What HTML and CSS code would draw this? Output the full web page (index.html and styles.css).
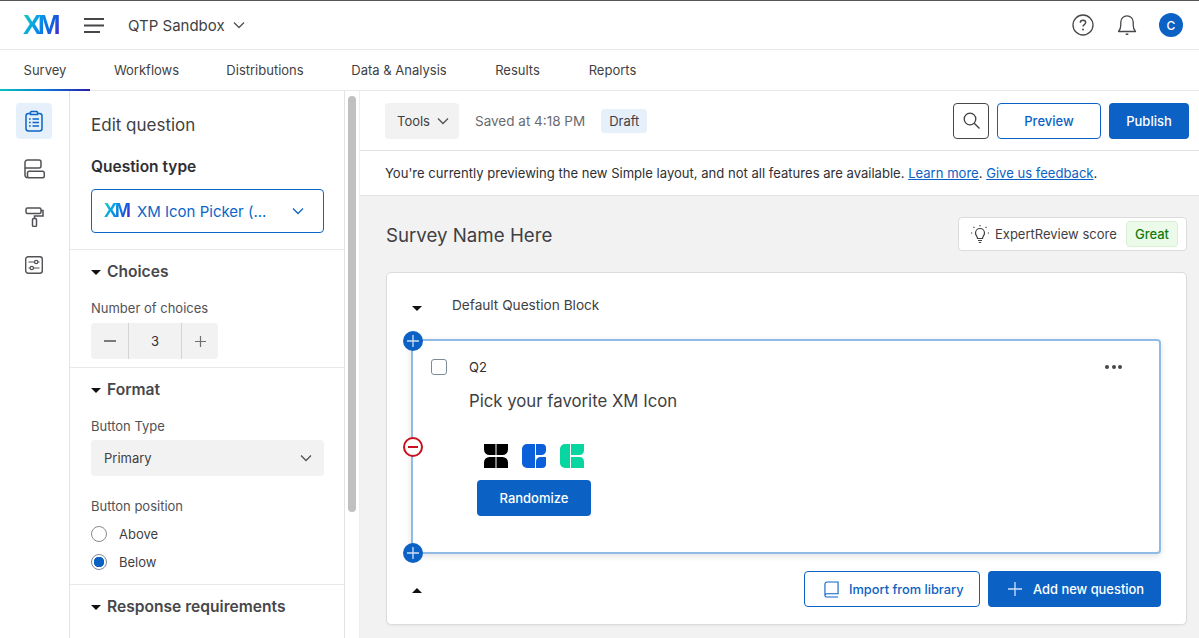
FILE: index.html
```html
<!DOCTYPE html>
<html lang="en">
<head>
<meta charset="utf-8">
<title>QTP Sandbox</title>
<link rel="stylesheet" href="styles.css">
</head>
<body>
<div class="app">
  <header class="topbar">
    <span class="logo">XM</span>
    <svg class="burger" width="20" height="15" viewBox="0 0 20 15"><path d="M0 1h20M0 7.500h20M0 14h16" stroke="#47474b" stroke-width="1.800" fill="none"/></svg>
    <span class="project">QTP Sandbox</span>
    <svg class="chev" width="12" height="8" viewBox="0 0 12 8"><path d="M1 1.500l5 5 5-5" stroke="#525256" stroke-width="1.300" fill="none"/></svg>
    <div class="top-icons">
      <svg width="22" height="22" viewBox="0 0 22 22"><circle cx="11" cy="11" r="10" stroke="#47474b" stroke-width="1.300" fill="none"/><path d="M8.300 8.800c0-1.600 1.200-2.600 2.700-2.600s2.700 1 2.700 2.400c0 2-2.700 2.100-2.700 4" stroke="#47474b" stroke-width="1.400" fill="none"/><circle cx="11" cy="15.600" r="1" fill="#47474b"/></svg>
      <svg width="20" height="22" viewBox="0 0 20 22"><path d="M1.500 17.500c1.400-1.400 2.300-3 2.300-6.500V8a6.200 6.200 0 0 1 12.400 0v3c0 3.500.9 5.100 2.300 6.500z" stroke="#47474b" stroke-width="1.300" fill="none" stroke-linejoin="round"/><path d="M8.700 20.200h2.600" stroke="#47474b" stroke-width="1.500"/></svg>
      <span class="avatar">C</span>
    </div>
  </header>
  <nav class="tabs">
    <a class="tab active">Survey</a>
    <a class="tab">Workflows</a>
    <a class="tab">Distributions</a>
    <a class="tab">Data &amp; Analysis</a>
    <a class="tab">Results</a>
    <a class="tab">Reports</a>
  </nav>
  <div class="body">
    <aside class="rail">
      <span class="rail-btn on">
        <svg width="18" height="22" viewBox="0 0 18 22"><rect x="1" y="3.500" width="16" height="17.500" rx="2.500" stroke="#0b66c8" stroke-width="1.500" fill="none"/><path d="M5.500 4.500V2.400a.9.900 0 0 1 .9-.9h5.200a.9.900 0 0 1 .9.900v2.100z" stroke="#0b66c8" stroke-width="1.500" fill="#e6f0fb"/><path d="M7.500 9H14M7.500 12.500H14M7.500 16H14M4 9h1.700M4 12.500h1.700M4 16h1.700" stroke="#0b66c8" stroke-width="1.500" fill="none"/></svg>
      </span>
      <span class="rail-btn">
        <svg width="21" height="20" viewBox="0 0 21 20"><path d="M3.500 18.800A2.500 2.500 0 0 1 1 16.300V3.500A2.500 2.500 0 0 1 3.500 1H15a2 2 0 0 1 2 2v4a2 2 0 0 1-2 2H1" stroke="#525256" stroke-width="1.500" fill="none"/><rect x="3.500" y="12.300" width="16.800" height="6.500" rx="1.800" stroke="#525256" stroke-width="1.500" fill="#fff"/></svg>
      </span>
      <span class="rail-btn">
        <svg width="19" height="20" viewBox="0 0 19 20"><rect x="1" y="1" width="15" height="5.500" rx="1.500" stroke="#525256" stroke-width="1.500" fill="none"/><path d="M16 3.500h2v5.500H9.500v2.500" stroke="#525256" stroke-width="1.500" fill="none"/><rect x="7.500" y="11.500" width="4" height="8" rx="1.200" stroke="#525256" stroke-width="1.500" fill="none"/></svg>
      </span>
      <span class="rail-btn">
        <svg width="18" height="18" viewBox="0 0 18 18"><rect x=".7" y=".7" width="16.600" height="16.600" rx="2.500" stroke="#525256" stroke-width="1.400" fill="none"/><path d="M3.500 6h6M13 6h1.500M3.500 12H5M8.500 12h6" stroke="#525256" stroke-width="1.200"/><circle cx="11.200" cy="6" r="1.700" stroke="#525256" stroke-width="1.200" fill="none"/><circle cx="6.800" cy="12" r="1.700" stroke="#525256" stroke-width="1.200" fill="none"/></svg>
      </span>
    </aside>
    <section class="panel">
      <div class="panel-top">
        <h1 class="panel-title">Edit question</h1>
        <h2 class="qtype-label">Question type</h2>
        <div class="qtype">
          <span class="logo logo-small">XM</span>
          <span class="qtype-text">XM Icon Picker (...</span>
          <svg class="qtype-chev" width="12" height="8" viewBox="0 0 12 8"><path d="M1 1.500l5 5 5-5" stroke="#0b66c8" stroke-width="1.300" fill="none"/></svg>
        </div>
      </div>
      <div class="group group-choices">
        <h3 class="group-head"><i class="caret"></i>Choices</h3>
        <div class="field-label">Number of choices</div>
        <div class="stepper">
          <span class="step"><svg width="12" height="2" viewBox="0 0 12 2"><path d="M0 1h12" stroke="#525256" stroke-width="1.500"/></svg></span>
          <span class="step-value">3</span>
          <span class="step step-plus"><svg width="11" height="11" viewBox="0 0 11 11"><path d="M0 5.500h11M5.500 0v11" stroke="#6f6f73" stroke-width="1.200"/></svg></span>
        </div>
      </div>
      <div class="group group-format">
        <h3 class="group-head"><i class="caret"></i>Format</h3>
        <div class="field-label">Button Type</div>
        <div class="select">Primary<svg width="12" height="8" viewBox="0 0 12 8"><path d="M1 1.500l5 5 5-5" stroke="#525256" stroke-width="1.300" fill="none"/></svg></div>
        <div class="field-label pos-label">Button position</div>
        <div class="radio-row"><i class="radio"></i>Above</div>
        <div class="radio-row"><i class="radio checked"></i>Below</div>
      </div>
      <div class="group group-resp">
        <h3 class="group-head"><i class="caret"></i>Response requirements</h3>
      </div>
    </section>
    <div class="scrolltrack"><div class="scrollthumb"></div></div>
    <main class="main">
      <div class="toolbar">
        <button class="tools">Tools<svg width="12" height="8" viewBox="0 0 12 8"><path d="M1 1.500l5 5 5-5" stroke="#525256" stroke-width="1.300" fill="none"/></svg></button>
        <span class="saved">Saved at 4:18 PM</span>
        <span class="draft">Draft</span>
        <span class="spacer"></span>
        <button class="search"><svg width="17" height="17" viewBox="0 0 17 17"><circle cx="7" cy="7" r="5.800" stroke="#3f3f43" stroke-width="1.300" fill="none"/><path d="M11.200 11.200l5.300 5.300" stroke="#3f3f43" stroke-width="1.300"/></svg></button>
        <button class="btn btn-outline preview">Preview</button>
        <button class="btn btn-primary publish">Publish</button>
      </div>
      <div class="notice">You're currently previewing the new Simple layout, and not all features are available. <a>Learn more</a>. <a>Give us feedback</a>.</div>
      <div class="canvas">
        <div class="survey-head">
          <h2 class="survey-name">Survey Name Here</h2>
          <div class="expert">
            <svg width="20" height="20" viewBox="0 0 20 20"><path d="M7.500 14.500c0-2-2-2.800-2-5.500a4.500 4.500 0 0 1 9 0c0 2.700-2 3.500-2 5.500z" stroke="#3f3f43" stroke-width="1.200" fill="none"/><path d="M8 16.500h4M8.800 18.500h2.400" stroke="#3f3f43" stroke-width="1.200"/><path d="M10 1v1.200M3.500 3l.9.900M16.500 3l-.9.900M1 9h1.200M17.800 9H19" stroke="#3f3f43" stroke-width="1.200"/></svg>
            <span>ExpertReview score</span>
            <span class="great">Great</span>
          </div>
        </div>
        <div class="block">
          <div class="block-head"><i class="caret"></i><span>Default Question Block</span></div>
          <div class="question">
            <span class="edge edge-top"><svg width="12" height="12" viewBox="0 0 12 12"><path d="M0 6h12M6 0v12" stroke="#cfe0f5" stroke-width="1.300"/></svg></span>
            <span class="edge edge-minus"><svg width="10" height="2" viewBox="0 0 10 2"><path d="M0 1h10" stroke="#c8101e" stroke-width="2"/></svg></span>
            <span class="edge edge-bottom"><svg width="12" height="12" viewBox="0 0 12 12"><path d="M0 6h12M6 0v12" stroke="#cfe0f5" stroke-width="1.300"/></svg></span>
            <div class="q-head">
              <i class="check"></i>
              <span class="q-num">Q2</span>
              <span class="dots"><i></i><i></i><i></i></span>
            </div>
            <div class="q-text">Pick your favorite XM Icon</div>
            <div class="xm-icons">
              <svg width="24" height="24" viewBox="0 0 24 24"><path d="M0 0h11.500v11H5.500A5.500 5.500 0 0 1 0 5.500zM24 0H12.500v11h6A5.500 5.500 0 0 0 24 5.500zM0 24h11.500V13H5.500A5.500 5.500 0 0 0 0 18.500zM24 24H12.500V13h6a5.500 5.500 0 0 1 5.500 5.500z" fill="#000"/></svg>
              <svg width="24" height="24" viewBox="0 0 24 24"><path d="M5 0h8v24H5a5 5 0 0 1-5-5V5a5 5 0 0 1 5-5z" fill="#0b5fd8"/><path d="M14 0h6a4 4 0 0 1 4 4v2.500a4.500 4.500 0 0 1-4.500 4.500H14zM24 13v7a4 4 0 0 1-4 4h-6v-6.500a4.500 4.500 0 0 1 4.500-4.500z" fill="#0b5fd8"/></svg>
              <svg width="24" height="24" viewBox="0 0 24 24"><path d="M5 0h5v24H5a5 5 0 0 1-5-5V5a5 5 0 0 1 5-5z" fill="#07d6a0"/><path d="M11 0h13v6.500a4.500 4.500 0 0 1-4.500 4.500H11zM11 13h8.500a4.500 4.500 0 0 1 4.500 4.500V24H11z" fill="#07d6a0"/></svg>
            </div>
            <button class="btn btn-primary randomize">Randomize</button>
          </div>
          <div class="block-foot">
            <i class="caret caret-up"></i>
            <span class="spacer"></span>
            <button class="btn btn-outline import"><svg width="15" height="17" viewBox="0 0 16 17"><path d="M1 14V3a2.500 2.500 0 0 1 2.500-2.500H15V13H3a2 2 0 0 0-2 2 1.500 1.500 0 0 0 1.500 1.500H15" stroke="#0b66c8" stroke-width="1.200" fill="none"/></svg>Import from library</button>
            <button class="btn btn-primary add"><svg width="14" height="14" viewBox="0 0 14 14"><path d="M0 7h14M7 0v14" stroke="#cfe0f5" stroke-width="1.300"/></svg>Add new question</button>
          </div>
        </div>
      </div>
    </main>
  </div>
</div>
</body>
</html>
```
FILE: styles.css
```css
* { box-sizing: border-box; }
html, body { margin: 0; height: 100%; overflow: hidden; }
body { font-family: Inter, "Noto Sans", sans-serif; font-size: 14px; color: #2f2f33; background: #fff; }
h1, h2, h3 { margin: 0; font-weight: 400; }
button { font-family: inherit; font-size: 13px; cursor: pointer; }
i { display: block; }
.app { height: 638px; display: flex; flex-direction: column; border-top: 1px solid #555; }
.topbar { height: 49px; flex: none; display: flex; align-items: center; padding: 0 16px 0 23px; border-bottom: 1px solid #e8e8e8; }
.logo { font-family: "Liberation Sans", sans-serif; font-weight: 700; font-size: 27.500px; letter-spacing: -3.500px; line-height: 1; width: 38px; background: linear-gradient(115deg, #14d8b0 0%, #089fe8 35%, #0a6be0 65%, #5a10c8 100%); -webkit-background-clip: text; background-clip: text; color: transparent; }
.burger { margin-left: 23px; }
.project { margin-left: 24px; font-size: 15px; color: #3f3f43; }
.chev { margin-left: 8px; }
.top-icons { margin-left: auto; display: flex; align-items: center; gap: 22.500px; }
.avatar { width: 24px; height: 24px; border-radius: 50%; background: #0b62c4; color: #fff; font-size: 12px; font-weight: 500; display: flex; align-items: center; justify-content: center; }
.tabs { height: 41px; flex: none; display: flex; border-bottom: 1px solid #e8e8e8; }
.tab { width: 90px; line-height: 40px; text-align: center; font-size: 13px; color: #3f3f43; white-space: nowrap; }
.tab:nth-child(2) { width: 113px; }
.tab:nth-child(3) { width: 124px; }
.tab:nth-child(4) { width: 144px; }
.tab:nth-child(5) { width: 93px; }
.tab:nth-child(6) { width: 97px; }
.tab.active { height: 41px; border-bottom: 2px solid; border-image: linear-gradient(90deg, #08c4c0, #0a7ad8 50%, #2a1ca8) 1; }
.body { flex: 1; display: flex; min-height: 0; }
.rail { width: 70px; flex: none; border-right: 1px solid #e3e3e3; padding: 12px 1px 0 0; display: flex; flex-direction: column; align-items: center; }
.rail-btn { width: 36px; height: 36px; border-radius: 4px; display: flex; align-items: center; justify-content: center; margin-bottom: 12px; }
.rail-btn.on { background: #e6f0fb; }
.panel { width: 275px; flex: none; overflow: hidden; border-right: 1px solid #e3e3e3; }
.panel-top { padding: 23px 20px 16px 21px; height: 159px; border-bottom: 1px solid #e8e8e8; }
.panel-title { font-size: 17px; line-height: 22px; color: #3f3f43; }
.qtype-label { font-size: 15.500px; font-weight: 600; line-height: 20px; margin-top: 21px; color: #2f2f33; }
.qtype { height: 44px; margin-top: 12px; border: 1px solid #0b66c8; border-radius: 4px; display: flex; align-items: center; padding: 0 19px 0 12px; color: #0b66c8; }
.logo-small { font-size: 19.500px; letter-spacing: -2.200px; width: 26px; }
.qtype-text { margin-left: 7px; font-size: 15px; }
.qtype-chev { margin-left: auto; }
.group { border-bottom: 1px solid #e8e8e8; padding: 0 20px 0 21px; }
.group-choices { height: 118px; padding-top: 11px; }
.group-format { height: 217px; padding-top: 11px; }
.group-resp { border: 0; padding-top: 11px; }
.group-head { font-size: 15.600px; font-weight: 600; line-height: 22px; color: #47474b; display: flex; align-items: center; }
.caret { width: 0; height: 0; border-left: 5px solid transparent; border-right: 5px solid transparent; border-top: 5px solid #111; margin-right: 6px; flex: none; }
.field-label { font-size: 13px; line-height: 18px; color: #525256; margin-top: 16px; }
.stepper { margin-top: 6px; width: 127px; height: 36px; background: #f2f2f2; border-radius: 4px; display: flex; align-items: center; }
.step { width: 37px; height: 36px; display: flex; align-items: center; justify-content: center; }
.step-plus { width: 36px; }
.step-value { width: 54px; height: 36px; line-height: 36px; text-align: center; font-size: 13px; border-left: 1px solid #d4d4d4; border-right: 1px solid #d4d4d4; }
.select { margin-top: 5px; height: 36px; background: #f2f2f2; border-radius: 4px; padding: 0 12px 0 13px; display: flex; align-items: center; justify-content: space-between; font-size: 13px; color: #3f3f43; }
.pos-label { margin-top: 21px; margin-bottom: 5px; }
.radio-row { display: flex; align-items: center; height: 28px; gap: 12px; font-size: 13px; color: #3f3f43; }
.radio { width: 16px; height: 16px; border-radius: 50%; border: 1px solid #8a8a8f; background: #fff; }
.radio.checked { border-color: #7f8a99; background: radial-gradient(circle, #0b62c4 0 5px, #fff 5.500px); }
.scrolltrack { width: 15px; flex: none; padding: 5px 3px 0; background: #fff; border-right: 1px solid #eee; }
.scrollthumb { width: 8px; height: 416px; background: #c0c0c0; border-radius: 4px; }
.main { flex: 1; min-width: 0; display: flex; flex-direction: column; background: #f2f2f2; }
.toolbar { height: 60px; flex: none; background: #fff; border-bottom: 1px solid #e3e3e3; display: flex; align-items: center; padding: 0 10px 0 25px; }
.spacer { flex: 1; }
.tools { height: 36px; width: 74px; border: 0; border-radius: 4px; background: #f2f2f2; color: #3f3f43; display: flex; align-items: center; justify-content: space-between; padding: 0 10px 0 12px; }
.saved { margin-left: 16px; font-size: 13.500px; color: #6a6a70; }
.draft { margin-left: 16px; height: 24px; line-height: 24px; padding: 0 8px; background: #e6f0fb; border-radius: 4px; font-size: 13px; color: #3f3f43; }
.search { width: 36px; height: 36px; background: #fff; border: 1px solid #47474b; border-radius: 4px; padding: 0; display: flex; align-items: center; justify-content: center; }
.btn { height: 36px; border-radius: 4px; font-weight: 500; display: inline-flex; align-items: center; justify-content: center; }
.btn-primary { background: #0b62c4; color: #fff; border: 0; }
.btn-outline { background: #fff; color: #0b62c4; border: 1px solid #0b62c4; }
.preview { width: 104px; margin-left: 8px; }
.publish { width: 80px; margin-left: 8px; }
.notice { height: 45px; flex: none; background: #fff; border-bottom: 1px solid #e3e3e3; padding: 0 25px; line-height: 44px; font-size: 13.070px; color: #2f2f33; white-space: nowrap; }
.notice a { color: #0b62c4; text-decoration: underline; }
.canvas { flex: 1; padding: 0 12px 0 26px; min-height: 0; }
.survey-head { height: 76px; display: flex; align-items: center; justify-content: space-between; }
.survey-name { font-size: 18.700px; color: #3f3f43; padding-top: 2px; }
.expert { width: 229px; height: 34px; background: #fff; border: 1px solid #dcdcdc; border-radius: 4px; display: flex; align-items: center; padding: 0 8px 0 11px; font-size: 13px; color: #3f3f43; gap: 5px; }
.great { margin-left: auto; height: 26px; line-height: 24px; padding: 0 8px; background: #ecfbe9; border: 1px solid #d8f2d3; border-radius: 4px; color: #107c10; font-weight: 500; }
.block { height: 353px; background: #fff; border: 1px solid #dcdcdc; border-radius: 5px; padding: 0 25px 0 24px; box-shadow: 0 1px 2px rgba(0,0,0,.05); }
.block-head { height: 66px; display: flex; align-items: center; font-size: 13.650px; color: #3f3f43; padding-bottom: 2px; }
.block-head .caret { margin: 6px 30px 0 1px; }
.question { position: relative; height: 215px; border: 2px solid #8fbbe6; border-radius: 4px; padding: 0 37px 0 18px; box-shadow: 0 2px 6px rgba(0,0,0,.12); }
.edge { position: absolute; left: -10px; width: 20px; height: 20px; border-radius: 50%; background: #0b62c4; display: flex; align-items: center; justify-content: center; }
.edge-top { top: -10px; }
.edge-bottom { bottom: -11px; }
.edge-minus { top: 96px; background: #fff; border: 2px solid #c8101e; }
.q-head { height: 52px; display: flex; align-items: center; }
.check { width: 16px; height: 16px; border: 1px solid #7f8a99; border-radius: 3px; background: #fff; }
.q-num { margin-left: 22px; font-size: 13px; color: #2f2f33; }
.dots { margin-left: auto; display: flex; gap: 2.500px; }
.dots i { width: 4px; height: 4px; border-radius: 50%; background: #47474b; }
.q-text { margin-left: 38px; font-size: 16.750px; line-height: 22px; color: #3f3f43; margin-top: -3px; }
.xm-icons { margin: 32px 0 0 53px; display: flex; gap: 14px; height: 24px; }
.randomize { width: 114px; margin: 12px 0 0 46px; }
.block-foot { height: 70px; display: flex; align-items: center; }
.caret-up { border-top: 0; border-bottom: 5px solid #111; margin: 2px 0 0 1px; }
.import { width: 176px; gap: 10px; justify-content: flex-start; padding: 0 0 0 19px; font-size: 12.800px; }
.add { width: 173px; margin-left: 8px; gap: 11px; justify-content: flex-start; padding: 0 0 0 20px; font-size: 12.900px; }
```
